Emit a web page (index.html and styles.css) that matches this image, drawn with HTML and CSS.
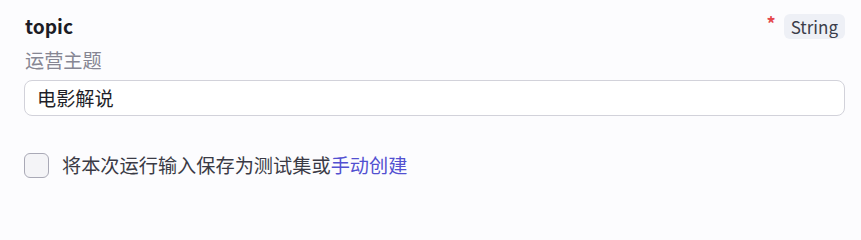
FILE: index.html
```html
<!DOCTYPE html>
<html lang="zh-CN">
<head>
<meta charset="utf-8">
<link rel="stylesheet" href="styles.css">
</head>
<body>
<div class="form">
  <div class="field">
    <div class="field-head">
      <span class="name">topic</span>
      <span class="meta"><span class="req">*</span><span class="tag">String</span></span>
    </div>
    <div class="desc">运营主题</div>
    <div class="input">电影解说</div>
  </div>
  <label class="save">
    <span class="box"></span>
    <span class="save-text">将本次运行输入保存为测试集或<a class="link">手动创建</a></span>
  </label>
</div>
</body>
</html>
```
FILE: styles.css
```css
html, body {
  margin: 0;
  padding: 0;
  background: #fcfcfe;
}
body {
  font-family: "Noto Sans CJK SC", "Noto Sans", sans-serif;
  color: #1f1f29;
  width: 861px;
  height: 205px;
  overflow: hidden;
}
.form {
  padding: 12px 16px 0 24px;
  display: flex;
  flex-direction: column;
}
.field {
  display: flex;
  flex-direction: column;
}
.field-head {
  display: flex;
  align-items: center;
  justify-content: space-between;
  height: 28px;
}
.name {
  font-size: 19.2px;
  font-weight: 700;
  color: #1c1c26;
  padding-left: 1px;
}
.meta {
  display: flex;
  align-items: center;
  gap: 8px;
}
.req {
  color: #e5484d;
  font-size: 18px;
  font-weight: 700;
  line-height: 1;
  position: relative;
  top: -3px;
}
.tag {
  background: #eef0f6;
  color: #3b3d4a;
  font-size: 17px;
  line-height: 25px;
  height: 25px;
  padding: 0 7px;
  border-radius: 6px;
}
.desc {
  font-size: 19.2px;
  color: #868693;
  line-height: 28px;
  margin-top: 6px;
  padding-left: 1px;
}
.input {
  margin-top: 6px;
  height: 34px;
  border: 1px solid #d2d2da;
  border-radius: 8px;
  background: #ffffff;
  font-size: 19.2px;
  line-height: 34px;
  padding: 0 12px;
  color: #1f1f29;
}
.save {
  margin-top: 36px;
  display: flex;
  align-items: center;
  gap: 13px;
}
.box {
  width: 25px;
  height: 25px;
  box-sizing: border-box;
  border: 1px solid #a9a9b6;
  border-radius: 6px;
  background: #f4f4f7;
}
.save-text {
  font-size: 19.2px;
  color: #3a3a45;
  line-height: 26px;
}
.link {
  color: #5250d1;
}
```
